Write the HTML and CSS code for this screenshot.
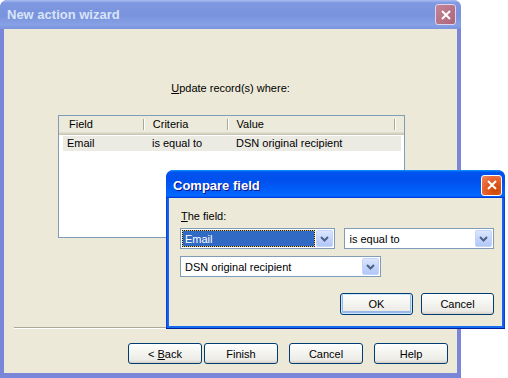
FILE: index.html
```html
<!DOCTYPE html>
<html lang="en">

<head>
  <meta charset="utf-8" />
  <title>New action wizard</title>
  <link rel="stylesheet" href="styles.css">
</head>

<body class="desktop">

  <!-- wizard window, in the background -->
  <div class="window wizard inactive">
    <div class="window_title">
      <span class="window_title_text">New action wizard</span>
      <span class="close_btn">
        <svg width="10" height="10" viewBox="0 0 10 10"><path d="M1 1L9 9M9 1L1 9" stroke="#fff" stroke-width="2" /></svg>
      </span>
    </div>
    <div class="wizard_body">
      <div class="wizard_caption"><u>U</u>pdate record(s) where:</div>

      <div class="list_view">
        <div class="list_head">
          <div class="list_col col_a">Field</div>
          <div class="list_col col_b">Criteria</div>
          <div class="list_col col_c">Value</div>
          <div class="list_col col_end"></div>
        </div>
        <div class="list_row selected">
          <div class="list_cell cell_a">Email</div>
          <div class="list_cell cell_b">is equal to</div>
          <div class="list_cell cell_c">DSN original recipient</div>
        </div>
      </div>

      <div class="wizard_sep"></div>
      <div class="wizard_buttons">
        <div class="btn_pair">
          <button class="xp_btn">&lt; <u>B</u>ack</button>
          <button class="xp_btn">Finish</button>
        </div>
        <button class="xp_btn">Cancel</button>
        <button class="xp_btn">Help</button>
      </div>
    </div>
  </div>

  <!-- compare field dialog, active -->
  <div class="window compare active">
    <div class="window_title">
      <span class="window_title_text">Compare field</span>
      <span class="close_btn">
        <svg width="10" height="10" viewBox="0 0 10 10"><path d="M1 1L9 9M9 1L1 9" stroke="#fff" stroke-width="2" /></svg>
      </span>
    </div>
    <div class="compare_body">
      <div class="field_label"><u>T</u>he field:</div>

      <div class="combo_row">
        <div class="combo combo_field">
          <div class="combo_text"><span class="combo_sel">Email</span></div>
          <div class="combo_arrow">
            <svg width="9" height="6" viewBox="0 0 9 6"><path d="M1 1L4.5 4.5L8 1" fill="none" stroke="#4d6185" stroke-width="2" /></svg>
          </div>
        </div>
        <div class="combo combo_criteria">
          <div class="combo_text">is equal to</div>
          <div class="combo_arrow">
            <svg width="9" height="6" viewBox="0 0 9 6"><path d="M1 1L4.5 4.5L8 1" fill="none" stroke="#4d6185" stroke-width="2" /></svg>
          </div>
        </div>
      </div>

      <div class="combo combo_value">
        <div class="combo_text">DSN original recipient</div>
        <div class="combo_arrow">
          <svg width="9" height="6" viewBox="0 0 9 6"><path d="M1 1L4.5 4.5L8 1" fill="none" stroke="#4d6185" stroke-width="2" /></svg>
        </div>
      </div>

      <div class="compare_buttons">
        <button class="xp_btn default_btn">OK</button>
        <button class="xp_btn">Cancel</button>
      </div>
    </div>
  </div>

</body>

</html>
```

FILE: styles.css
```css
body.desktop {
  margin: 0;
  width: 508px;
  height: 378px;
  position: relative;
  overflow: hidden;
  background-color: #ffffff;
  font-family: "Liberation Sans", Arial, sans-serif;
  font-size: 11px;
  color: #000;
}

/* windows */
.window {
  position: absolute;
  box-sizing: border-box;
  display: flex;
  flex-direction: column;
  border-radius: 8px 8px 0 0;
}

.window_title {
  display: flex;
  align-items: center;
  justify-content: space-between;
  border-radius: 7px 7px 0 0;
}

.window_title_text {
  font-weight: bold;
  font-size: 13px;
}

.close_btn {
  box-sizing: border-box;
  width: 21px;
  height: 21px;
  display: flex;
  align-items: center;
  justify-content: center;
  border: 1px solid #fff;
  border-radius: 3px;
}

.inactive .window_title {
  height: 29px;
  margin: 0 -4px;
  padding: 0 5px 0 7px;
  background: linear-gradient(#a9bdf0 0, #7e97e0 3px, #7a93de 55%, #87a1e6 85%, #7b94de 100%);
}

.inactive .window_title_text {
  color: #d8e4f8;
}

.inactive .close_btn {
  border-color: #dcd7ee;
  background: linear-gradient(135deg, #c48596, #ac6578);
}

.active .window_title {
  height: 28px;
  margin: 0 -3px;
  padding: 2px 3px 0 7px;
  box-sizing: border-box;
  background: linear-gradient(#0997ff, #0053ee 8%, #0050ee 40%, #0066ff 88%, #0066ff 93%, #005bff 95%, #003dd7 96%, #003dd7);
}

.active .window_title_text {
  color: #fff;
  text-shadow: 1px 1px #0f1089;
}

.active .close_btn {
  background: radial-gradient(circle at 70% 75%, #cc4600, #e6602e 55%, #f08a66);
}

/* wizard */
.wizard {
  left: 0;
  top: 0;
  width: 461px;
  height: 378px;
  padding: 0 4px 5px 4px;
  background-color: #7a86d8;
}

.wizard_body {
  flex: 1;
  display: flex;
  flex-direction: column;
  background-color: #ece9d8;
}

.wizard_caption {
  margin-top: 53px;
  line-height: 13px;
  text-align: center;
}

.list_view {
  box-sizing: border-box;
  width: 347px;
  height: 123px;
  margin: 20px 0 0 54px;
  border: 1px solid #7f9db9;
  background-color: #fff;
}

.list_head {
  display: flex;
  height: 19px;
  background-color: #ebeadb;
  box-shadow: inset 0 -1px #cbc7b8, inset 0 -2px #d6d2c2, inset 0 -3px #e2decd;
}

.list_col {
  box-sizing: border-box;
  height: 16px;
  line-height: 16px;
  padding-left: 10px;
  background:
    linear-gradient(#aca899, #aca899) 0 3px / 1px 11px no-repeat,
    linear-gradient(#fff, #fff) 1px 3px / 1px 11px no-repeat;
}

.col_a {
  width: 85px;
  background: none;
}

.col_b {
  width: 85px;
}

.col_c {
  width: 170px;
}

.col_end {
  flex: 1;
}

.list_row {
  display: flex;
  width: 338px;
  height: 15px;
  margin: 1px 0 0 4px;
  line-height: 15px;
}

.list_row.selected {
  background-color: #ecebe3;
}

.list_cell {
  width: 85px;
  padding-left: 4px;
  box-sizing: border-box;
  white-space: nowrap;
}

.cell_c {
  flex: 1;
  padding-left: 3px;
}

.wizard_sep {
  margin: auto 10px 0 10px;
  border-top: 1px solid #aca899;
  border-bottom: 1px solid #fff;
}

.wizard_buttons {
  display: flex;
  justify-content: flex-end;
  gap: 11px;
  margin: 14px 0 9px 0;
  padding-right: 9px;
}

.btn_pair {
  display: flex;
  gap: 2px;
}

/* buttons */
.xp_btn {
  box-sizing: border-box;
  width: 74px;
  height: 21px;
  padding: 0;
  border: 1px solid #003c74;
  border-radius: 3px;
  background: linear-gradient(#ffffff, #f4f4f0 45%, #ecebe6 85%, #d6d0c5);
  font-family: inherit;
  font-size: 11px;
  color: #000;
}

.default_btn {
  box-shadow: inset 0 0 0 1px #cee7ff, inset 0 -1px 0 2px #98b8ea;
}

/* compare dialog */
.compare {
  left: 166px;
  top: 170px;
  width: 339px;
  height: 159px;
  padding: 0 3px 3px 3px;
  background: linear-gradient(90deg, #0831d9, #166aee 2px, #166aee calc(100% - 2px), #0831d9);
  box-shadow: inset 0 -1px #001ea0;
}

.compare_body {
  flex: 1;
  display: flex;
  flex-direction: column;
  padding: 12px 8px 0 11px;
  background-color: #ece9d8;
}

.field_label {
  line-height: 13px;
  margin-bottom: 5px;
  padding-left: 1px;
}

.combo_row {
  display: flex;
  gap: 9px;
}

.combo {
  box-sizing: border-box;
  height: 21px;
  display: flex;
  padding: 1px;
  border: 1px solid #7f9db9;
  background-color: #fff;
}

.combo_field {
  width: 156px;
}

.combo_criteria {
  width: 150px;
}

.combo_value {
  width: 201px;
  margin-top: 7px;
}

.combo_text {
  flex: 1;
  display: flex;
  align-items: center;
  padding-left: 3px;
  white-space: nowrap;
}

.combo_field .combo_text {
  padding-left: 0;
}

.combo_sel {
  box-sizing: border-box;
  height: 100%;
  flex: 1;
  display: flex;
  align-items: center;
  padding-left: 2px;
  margin-right: 1px;
  border: 1px dotted #1b1b1b;
  background: linear-gradient(#316ac5, #316ac5) padding-box, #e2c56a;
  color: #fff;
}

.combo_arrow {
  box-sizing: border-box;
  width: 17px;
  display: flex;
  align-items: center;
  justify-content: center;
  border: 1px solid #c3d3fd;
  border-radius: 2px;
  background: linear-gradient(#dbe6fe, #c0d2fb 60%, #b3c8f7);
}

.compare_buttons {
  display: flex;
  justify-content: flex-end;
  gap: 8px;
  margin-top: 16px;
}

.compare_buttons .xp_btn {
  width: 73px;
  height: 22px;
}
```
